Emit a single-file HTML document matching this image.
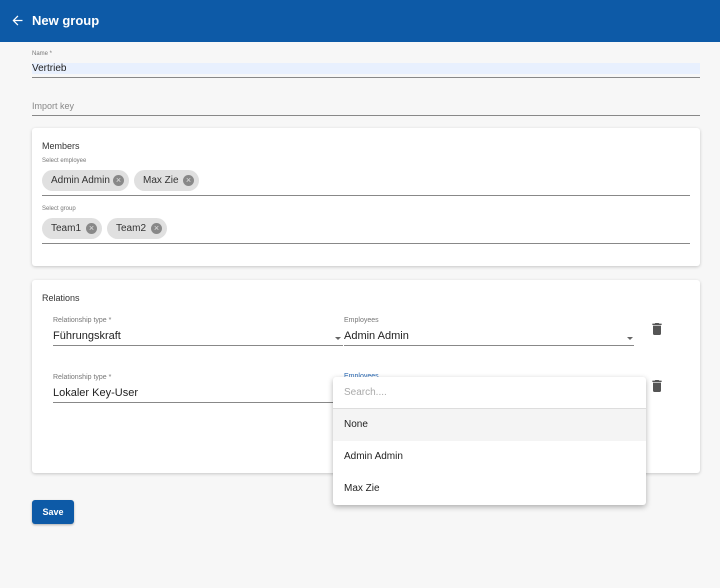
<!DOCTYPE html>
<html><head><style>
*{box-sizing:border-box;margin:0;padding:0}
body{width:720px;height:588px;background:#f7f7f7;font-family:"Liberation Sans",sans-serif;color:#222;position:relative;overflow:hidden}
.abs{position:absolute}
.hdr{left:0;top:0;width:720px;height:42px;background:#0d5aa7;color:#fff}
.lbl{font-size:7px;color:#777}
.val{font-size:11px;color:#222}
.line{height:1px;background:#888}
.card{background:#fff;border-radius:3px;box-shadow:0 1px 3px rgba(0,0,0,.2)}
.chip{position:absolute;height:21px;border-radius:11px;background:#e0e0e0;font-size:10px;line-height:21px;padding-left:9px;color:#333}
.chip i{position:absolute;right:5px;top:5px;width:11px;height:11px;border-radius:50%;background:#888;color:#e0e0e0;font-style:normal;font-size:9px;line-height:11px;text-align:center}
</style></head><body>
<div class="abs hdr">
<svg class="abs" style="left:10px;top:13px" width="15" height="15" viewBox="0 0 24 24"><path d="M20 11H7.8l5.6-5.6L12 4l-8 8 8 8 1.4-1.4L7.8 13H20z" fill="#fff"/></svg>
<div class="abs" style="left:32px;top:13px;font-size:13px;font-weight:bold">New group</div>
</div>
<div class="abs lbl" style="left:32px;top:51px;font-size:6px">Name *</div>
<div class="abs" style="left:32px;top:63px;width:668px;height:11px;background:#e8f0fe"></div>
<div class="abs val" style="left:32px;top:63px;font-size:10px">Vertrieb</div>
<div class="abs line" style="left:32px;top:77px;width:668px"></div>
<div class="abs" style="left:32px;top:101px;font-size:9px;color:#888">Import key</div>
<div class="abs line" style="left:32px;top:115px;width:668px"></div>

<div class="abs card" style="left:32px;top:128px;width:668px;height:138px">
<div class="abs" style="left:10px;top:13px;font-size:9px;color:#333">Members</div>
<div class="abs lbl" style="left:10px;top:30px;font-size:6px">Select employee</div>
<div class="chip" style="left:10px;top:42px;width:87px">Admin Admin<i>×</i></div>
<div class="chip" style="left:102px;top:42px;width:65px">Max Zie<i>×</i></div>
<div class="abs line" style="left:10px;top:67px;width:648px"></div>
<div class="abs lbl" style="left:10px;top:78px;font-size:6px">Select group</div>
<div class="chip" style="left:10px;top:90px;width:60px">Team1<i>×</i></div>
<div class="chip" style="left:75px;top:90px;width:60px">Team2<i>×</i></div>
<div class="abs line" style="left:10px;top:115px;width:648px"></div>
</div>

<div class="abs card" style="left:32px;top:280px;width:668px;height:193px">
<div class="abs" style="left:10px;top:13px;font-size:9px;color:#333">Relations</div>
<div class="abs lbl" style="left:21px;top:37px">Relationship type *</div>
<div class="abs val" style="left:21px;top:50px">Führungskraft</div>
<div class="abs" style="left:303px;top:57px;border:3px solid transparent;border-top:3px solid #666"></div>
<div class="abs line" style="left:21px;top:65px;width:290px"></div>
<div class="abs lbl" style="left:312px;top:37px">Employees</div>
<div class="abs val" style="left:312px;top:50px">Admin Admin</div>
<div class="abs" style="left:595px;top:57px;border:3px solid transparent;border-top:3px solid #666"></div>
<div class="abs line" style="left:312px;top:65px;width:290px"></div>
<svg class="abs" style="left:617px;top:40px" width="16" height="18" viewBox="0 0 24 24"><path d="M6 19c0 1.1.9 2 2 2h8c1.1 0 2-.9 2-2V7H6zM19 4h-3.5l-1-1h-5l-1 1H5v2h14z" fill="#555"/></svg>
<div class="abs lbl" style="left:21px;top:94px">Relationship type *</div>
<div class="abs val" style="left:21px;top:107px">Lokaler Key-User</div>
<div class="abs line" style="left:21px;top:122px;width:290px"></div>
<div class="abs" style="left:312px;top:93px;font-size:7px;color:#2a6ab5">Employees</div>
<svg class="abs" style="left:617px;top:97px" width="16" height="18" viewBox="0 0 24 24"><path d="M6 19c0 1.1.9 2 2 2h8c1.1 0 2-.9 2-2V7H6zM19 4h-3.5l-1-1h-5l-1 1H5v2h14z" fill="#555"/></svg>
</div>

<div class="abs" style="left:333px;top:377px;width:313px;height:128px;background:#fff;border-radius:3px;box-shadow:0 2px 6px rgba(0,0,0,.3)">
<div class="abs" style="left:11px;top:10px;font-size:10px;color:#aaa">Search....</div>
<div class="abs" style="left:0;top:31px;width:313px;height:1px;background:#ddd"></div>
<div class="abs" style="left:0;top:32px;width:313px;height:32px;background:#f4f4f4"></div>
<div class="abs val" style="left:11px;top:42px;font-size:10px">None</div>
<div class="abs val" style="left:11px;top:74px;font-size:10px">Admin Admin</div>
<div class="abs val" style="left:11px;top:106px;font-size:10px">Max Zie</div>
</div>

<div class="abs" style="left:32px;top:500px;width:42px;height:24px;background:#0d5aa7;border-radius:3px;color:#fff;font-size:9px;font-weight:bold;text-align:center;line-height:24px;box-shadow:0 1px 2px rgba(0,0,0,.3)">Save</div>
</body></html>
